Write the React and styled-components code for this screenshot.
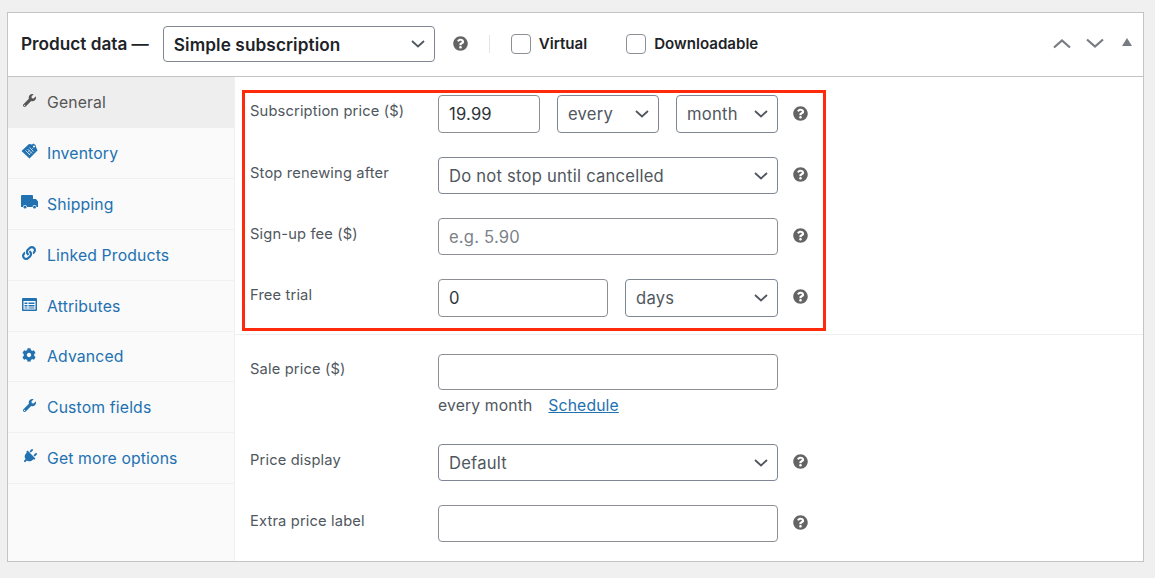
import React from "react";
import styled, { createGlobalStyle } from "styled-components";
import { FaWrench, FaLink, FaCog, FaPlug, FaQuestionCircle } from "react-icons/fa";

const Global = createGlobalStyle`
  html, body { margin: 0; padding: 0; background: #f0f0f1; }
  body { font-family: Inter, "Liberation Sans", sans-serif; width: 1155px; height: 578px; overflow: hidden; }
  * { box-sizing: border-box; }
`;

const Page = styled.div`
  padding: 12px 11px 0 7px;
`;
const Box = styled.div`
  position: relative;
  height: 550px;
  background: #fff;
  border: 1px solid #c3c4c7;
  display: flex;
  flex-direction: column;
`;
const Header = styled.header`
  height: 64px;
  flex: none;
  border-bottom: 1px solid #c3c4c7;
  display: flex;
  align-items: center;
  padding: 0 11px 2px 13px;
`;
const Title = styled.h2`
  margin: 0 14px 0 0;
  font-size: 17.2px;
  font-weight: 600;
  color: #1d2327;
`;
const ControlWrap = styled.div`
  position: relative;
  flex: none;
  width: ${(p) => p.$w}px;
  margin-right: ${(p) => p.$mr || 0}px;
  margin-top: ${(p) => p.$mt || 0}px;
`;
const Chevron = styled.svg`
  position: absolute;
  right: 10px;
  top: 50%;
  width: 14px;
  height: 8px;
  margin-top: -4px;
  pointer-events: none;
`;
const Field = styled.select`
  appearance: none;
  display: block;
  width: 100%;
  height: ${(p) => p.$h || 37}px;
  padding: 0 24px 0 10px;
  background: #fff;
  border: 1px solid #7f8892;
  border-radius: 4px;
  font: ${(p) => (p.$bold ? 600 : 400)} ${(p) => (p.$bold ? 17.2 : 16.6)}px Inter, "Liberation Sans", sans-serif;
  letter-spacing: ${(p) => (p.$bold ? "0.1px" : "0.23px")};
  color: ${(p) => (p.$bold ? "#1d2327" : "#50575e")};
`;
const TextField = styled.input`
  display: block;
  width: ${(p) => p.$w}px;
  flex: none;
  height: ${(p) => p.$h || 37}px;
  margin-right: ${(p) => p.$mr || 0}px;
  padding: 0 10px;
  background: #fff;
  border: 1px solid #8c8f94;
  border-radius: 4px;
  font: 400 16.6px Inter, "Liberation Sans", sans-serif;
  letter-spacing: 0.2px;
  color: #2c3338;
  &::placeholder { color: #7b8288; opacity: 1; }
`;
const HelpIcon = styled(FaQuestionCircle)`
  flex: none;
  width: 15px;
  height: 15px;
  color: #646464;
`;
const HeadHelp = styled.span`
  display: flex;
  margin: 0 21px 0 18px;
`;
const Divider = styled.span`
  width: 1px;
  height: 18px;
  background: #e4e4e6;
  margin-right: 21px;
`;
const CheckLabel = styled.label`
  display: flex;
  align-items: center;
  gap: 8px;
  margin-right: ${(p) => p.$mr}px;
  font-size: 15.1px;
  font-weight: 600;
  color: #1d2327;
`;
const CheckBoxMark = styled.span`
  width: 20px;
  height: 20px;
  border: 1px solid #8c8f94;
  border-radius: 4px;
  background: #fff;
`;
const HeadActions = styled.div`
  margin-left: auto;
  display: flex;
  align-items: center;
  gap: 15px;
`;
const ActionIcon = styled.svg`
  display: block;
  width: 18px;
  height: 11px;
`;
const Collapse = styled.svg`
  display: block;
  width: 10px;
  height: 8px;
  margin: -4px 0 0 3px;
`;
const Body = styled.div`
  flex: 1;
  display: flex;
  min-height: 0;
`;
const Sidebar = styled.nav`
  width: 227px;
  flex: none;
  background: #fafafa;
  border-right: 1px solid #f0f0f1;
`;
const Tab = styled.div`
  height: ${(p) => p.$h || 51}px;
  display: flex;
  align-items: center;
  gap: 9px;
  padding: 0 0 0 12px;
  border-bottom: 1px solid ${(p) => (p.$active ? "#eee" : "#f0f0f1")};
  background: ${(p) => (p.$active ? "#eee" : "transparent")};
  color: ${(p) => (p.$active ? "#555" : "#2271b1")};
  font-size: 15.75px;
  letter-spacing: 0.15px;
`;
const TabIconBox = styled.span`
  width: 18px;
  height: 16px;
  flex: none;
  display: flex;
  align-items: center;
  justify-content: center;
  margin-top: -4px;
  svg { display: block; }
`;
const Main = styled.main`
  flex: 1;
  min-width: 0;
`;
const Group = styled.section`
  padding: ${(p) => p.$pt}px 0 0 15px;
  height: ${(p) => p.$height}px;
  border-bottom: ${(p) => (p.$line ? "1px solid #eee" : "none")};
`;
const Row = styled.div`
  display: flex;
  align-items: flex-start;
  height: ${(p) => p.$h || 61}px;
`;
const Label = styled.label`
  width: 188px;
  flex: none;
  padding-top: ${(p) => p.$pt ?? 7}px;
  font-size: 14.7px;
  letter-spacing: 0.15px;
  line-height: 18px;
  color: #50575e;
`;
const RowHelp = styled.span`
  display: flex;
  height: ${(p) => p.$h || 35}px;
  align-items: center;
  margin-left: 15px;
`;
const Note = styled.div`
  margin-top: 6px;
  font-size: 15.7px;
  letter-spacing: 0.15px;
  line-height: 20px;
  color: #50575e;
`;
const ScheduleLink = styled.a`
  margin-left: 16px;
  color: #2271b1;
  text-decoration: underline;
`;
const Annotation = styled.div`
  position: absolute;
  left: 234px;
  top: 77px;
  width: 584px;
  height: 241px;
  border: 3px solid #ff2a0c;
  pointer-events: none;
`;

const Chev = () => (
  <Chevron viewBox="0 0 14 8" fill="none">
    <path d="M1 1l6 5.5L13 1" stroke="#50575e" strokeWidth="1.8" />
  </Chevron>
);

const Select = ({ w, mr, mt, h, bold, value }) => (
  <ControlWrap $w={w} $mr={mr} $mt={mt}>
    <Field $h={h} $bold={bold} defaultValue={value}>
      <option>{value}</option>
    </Field>
    <Chev />
  </ControlWrap>
);

const TagIcon = () => (
  <svg width="17" height="16" viewBox="0 0 17 16">
    <path d="M0.5 8 L8 1 L11 1.5 L12.5 0.5 L14.5 2 L15 4 L16.5 7.5 L8.5 15.5 Z" fill="#2271b1" />
    <path d="M4.5 7.5l4.5 4.5M6.5 6l4.5 4.5M8.5 4.5l4 4" stroke="#d5e4f0" strokeWidth="0.9" />
    <path d="M6 10l3-3M8 11.5l3-3M10 7l2-2" stroke="#d5e4f0" strokeWidth="0.6" />
    <circle cx="13" cy="3.5" r="1" fill="#fff" />
  </svg>
);
const TruckIcon = () => (
  <svg width="17" height="14" viewBox="0 0 17 14">
    <path d="M0 1a1 1 0 0 1 1-1h10a1 1 0 0 1 1 1v3h3l2 2.5V12h-1.5a2 2 0 0 0-4 0H6a2 2 0 0 0-4 0H0z" fill="#2271b1" />
    <circle cx="4" cy="12.2" r="1.4" fill="#2271b1" />
    <circle cx="13.5" cy="12.2" r="1.4" fill="#2271b1" />
  </svg>
);
const TableIcon = () => (
  <svg width="15" height="13" viewBox="0 0 15 13">
    <rect width="15" height="13" rx="1" fill="#2271b1" />
    <rect x="1.5" y="3" width="12" height="8.5" fill="#fff" />
    <path d="M2.5 4.5h3v1.5h-3zM2.5 7h3v1.5h-3zM6.5 4.5h6v1.5h-6zM6.5 7h6v1.5h-6zM2.5 9.5h3v1h-3zM6.5 9.5h6v1h-6z" fill="#2271b1" />
  </svg>
);

const tabs = [
  ["Inventory", <TagIcon />, 51],
  ["Shipping", <TruckIcon />, 51],
  ["Linked Products", <FaLink size={14} color="#2271b1" />, 51],
  ["Attributes", <TableIcon />, 51],
  ["Advanced", <FaCog size={14} color="#2271b1" />, 50],
  ["Custom fields", <FaWrench size={13} color="#2271b1" />, 51],
  ["Get more options", <FaPlug size={15} color="#2271b1" style={{ transform: "rotate(45deg)" }} />, 51],
];

export default function App() {
  return (
    <Page>
      <Global />
      <Box>
        <Header>
          <Title>Product data —</Title>
          <Select w={272} h={36} mt={1} bold value="Simple subscription" />
          <HeadHelp><HelpIcon /></HeadHelp>
          <Divider />
          <CheckLabel $mr={39}><CheckBoxMark />Virtual</CheckLabel>
          <CheckLabel $mr={0}><CheckBoxMark />Downloadable</CheckLabel>
          <HeadActions>
            <ActionIcon viewBox="0 0 18 11" fill="none"><path d="M1 9.5l8-7 8 7" stroke="#787c82" strokeWidth="2.2" /></ActionIcon>
            <ActionIcon viewBox="0 0 18 11" fill="none"><path d="M1 1.5l8 7 8-7" stroke="#787c82" strokeWidth="2.2" /></ActionIcon>
            <Collapse viewBox="0 0 10 8"><path d="M5 0l5 8H0z" fill="#787c82" /></Collapse>
          </HeadActions>
        </Header>
        <Body>
          <Sidebar>
            <Tab $active>
              <TabIconBox><FaWrench size={13} color="#555" /></TabIconBox>
              General
            </Tab>
            {tabs.map(([name, icon, h]) => (
              <Tab key={name} $h={h}>
                <TabIconBox>{icon}</TabIconBox>
                {name}
              </Tab>
            ))}
          </Sidebar>
          <Main>
            <Group $pt={18} $height={258} $line>
              <Row $h={62}>
                <Label>Subscription price ($)</Label>
                <TextField $w={102} $h={38} $mr={17} defaultValue="19.99" />
                <Select w={102} mr={17} h={38} value="every" />
                <Select w={102} h={38} value="month" />
                <RowHelp $h={37}><HelpIcon /></RowHelp>
              </Row>
              <Row>
                <Label>Stop renewing after</Label>
                <Select w={340} value="Do not stop until cancelled" />
                <RowHelp><HelpIcon /></RowHelp>
              </Row>
              <Row>
                <Label>Sign-up fee ($)</Label>
                <TextField $w={340} placeholder="e.g. 5.90" />
                <RowHelp><HelpIcon /></RowHelp>
              </Row>
              <Row>
                <Label>Free trial</Label>
                <TextField $w={170} $h={38} $mr={17} defaultValue="0" />
                <Select w={153} h={38} value="days" />
                <RowHelp><HelpIcon /></RowHelp>
              </Row>
            </Group>
            <Group $pt={19} $height={226}>
              <Row $h={90}>
                <Label $pt={6}>Sale price ($)</Label>
                <div>
                  <TextField $w={340} $h={36} />
                  <Note>every month<ScheduleLink>Schedule</ScheduleLink></Note>
                </div>
              </Row>
              <Row>
                <Label>Price display</Label>
                <Select w={340} value="Default" />
                <RowHelp><HelpIcon /></RowHelp>
              </Row>
              <Row>
                <Label>Extra price label</Label>
                <TextField $w={340} />
                <RowHelp><HelpIcon /></RowHelp>
              </Row>
            </Group>
          </Main>
        </Body>
        <Annotation />
      </Box>
    </Page>
  );
}
